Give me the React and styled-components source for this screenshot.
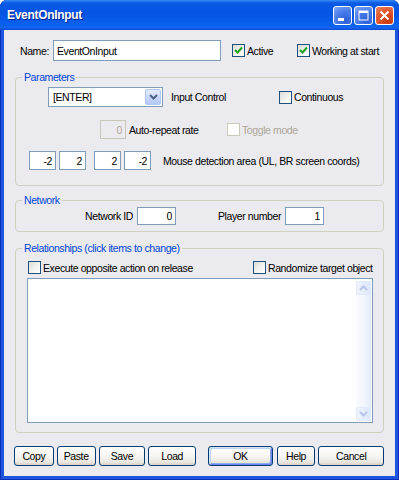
import React from "react";
import styled, { createGlobalStyle } from "styled-components";

const GlobalStyle = createGlobalStyle`
  html, body {
    margin: 0;
    padding: 0;
    background: #fff;
  }
  body {
    font-family: "Liberation Sans", Arial, sans-serif;
    font-size: 10.5px;
    letter-spacing: -0.4px;
    color: #000;
  }
  * {
    box-sizing: border-box;
  }
`;

const Window = styled.div`
  width: 399px;
  height: 480px;
  display: flex;
  flex-direction: column;
  background: #1d55df;
  border-radius: 7px 7px 0 0;
  overflow: hidden;
  padding: 0 4px 4px;
  box-shadow: inset 1px 0 #0b2fb8, inset -1px 0 #0b2fb8, inset 0 -1px #0b2fb8;
`;

const TitleBar = styled.div`
  height: 30px;
  margin: 0 -4px;
  display: flex;
  align-items: center;
  justify-content: space-between;
  padding: 0 5px 0 7px;
  background: linear-gradient(
    180deg,
    #3a8cf7 0%,
    #0a5ae6 10%,
    #0553e3 45%,
    #0b62ef 85%,
    #1665f0 93%,
    #0a45cf 100%
  );
`;

const Title = styled.span`
  color: #fff;
  font-weight: bold;
  font-size: 12px;
  letter-spacing: -0.3px;
  text-shadow: 1px 1px #0a1f8a;
`;

const TitleButtons = styled.div`
  display: flex;
  gap: 2px;
  margin-top: 1px;
`;

const TitleButton = styled.div`
  width: 19px;
  height: 19px;
  border: 1px solid #fff;
  border-radius: 3px;
  display: flex;
  align-items: center;
  justify-content: center;
  background: ${(p) =>
    p.$close
      ? "radial-gradient(circle at 70% 80%, #c8380f 0%, #e2582f 55%, #f08a66 100%)"
      : "radial-gradient(circle at 70% 80%, #2c5fd8 0%, #4a7eea 55%, #86aaf5 100%)"};
`;

const Body = styled.div`
  flex: 1;
  background: #ebeaef;
  padding: 10px 11px 0;
  display: flex;
  flex-direction: column;
`;

const Row = styled.div`
  display: flex;
  align-items: center;
  height: ${(p) => p.$h}px;
  margin-top: ${(p) => p.$mt || 0}px;
  margin-left: ${(p) => p.$ml || 0}px;
`;

const Label = styled.span`
  display: block;
  white-space: nowrap;
  margin-left: ${(p) => p.$ml || 0}px;
  width: ${(p) => (p.$w ? `${p.$w}px` : "auto")};
  text-align: ${(p) => (p.$right ? "right" : "left")};
  color: ${(p) => (p.$disabled ? "#aca899" : "#000")};
`;

const TextBox = styled.input`
  width: ${(p) => p.$w}px;
  height: ${(p) => p.$h || 19}px;
  margin: 0 0 0 ${(p) => p.$ml || 0}px;
  padding: 0 3px;
  border: 1px solid ${(p) => (p.disabled ? "#c9c7ba" : "#7f9db9")};
  background: ${(p) => (p.disabled ? "#ebeaef" : "#fff")};
  color: ${(p) => (p.disabled ? "#aca899" : "#000")};
  font: inherit;
  letter-spacing: inherit;
  text-align: ${(p) => (p.$right ? "right" : "left")};
  outline: none;
  -webkit-text-fill-color: ${(p) => (p.disabled ? "#aca899" : "#000")};
  opacity: 1;
`;

const CheckItem = styled.label`
  display: flex;
  align-items: center;
  gap: 2px;
  width: ${(p) => (p.$w ? `${p.$w}px` : "auto")};
  margin-left: ${(p) => p.$ml || 0}px;
  white-space: nowrap;
  color: ${(p) => (p.$disabled ? "#aca899" : "#000")};
`;

const Box = styled.span`
  width: 13px;
  height: 13px;
  flex: none;
  display: flex;
  align-items: center;
  justify-content: center;
  border: 1px solid ${(p) => (p.$disabled ? "#cac8bb" : "#1c5180")};
  background: ${(p) =>
    p.$disabled ? "#fff" : "linear-gradient(135deg, #dcdcd7 0%, #f4f4f1 60%, #fff 100%)"};
`;

const Group = styled.fieldset`
  margin: ${(p) => p.$mt}px 0 0;
  padding: 0 0 ${(p) => p.$pb}px;
  border: 1px solid #d0d0bf;
  border-radius: 4px;
  min-width: 0;
`;

const Legend = styled.legend`
  margin-left: 6px;
  padding: 0 2px;
  line-height: 13px;
  color: #0046d5;
`;

const Combo = styled.div`
  width: ${(p) => p.$w}px;
  height: 20px;
  margin-left: ${(p) => p.$ml}px;
  border: 1px solid #7f9db9;
  background: #fff;
  display: flex;
  align-items: stretch;
  justify-content: space-between;
  padding: 1px;
`;

const ComboText = styled.span`
  display: flex;
  align-items: center;
  padding-left: 3px;
`;

const ComboButton = styled.span`
  width: 16px;
  display: flex;
  align-items: center;
  justify-content: center;
  border: 1px solid #b1c7f3;
  border-radius: 2px;
  background: linear-gradient(180deg, #e3ebfd 0%, #c6d6fa 60%, #b5c9f6 100%);
`;

const ListBox = styled.div`
  margin: 4px 10px 0 11px;
  height: 145px;
  border: 1px solid #7f9db9;
  background: #fff;
  display: flex;
  justify-content: flex-end;
  padding: 2px 1px 1px 0;
`;

const ScrollBar = styled.div`
  width: 15px;
  display: flex;
  flex-direction: column;
  justify-content: space-between;
  background: linear-gradient(90deg, #fbfbfd 0%, #f2f5fc 50%, #e4ebfa 100%);
`;

const ScrollButton = styled.div`
  height: 14px;
  display: flex;
  align-items: center;
  justify-content: center;
  border: 1px solid #e2e9f8;
  border-radius: 2px;
  background: linear-gradient(90deg, #eef3fd 0%, #dde7fb 100%);
`;

const ButtonRow = styled.div`
  display: flex;
  margin: 13px 0 0 -1px;
`;

const Button = styled.button`
  width: ${(p) => p.$w}px;
  height: 20px;
  margin-left: ${(p) => p.$ml || 0}px;
  padding: 0;
  font: inherit;
  letter-spacing: inherit;
  color: #000;
  border: 1px solid #003c74;
  border-radius: 3px;
  background: linear-gradient(180deg, #ffffff 0%, #f5f4f0 55%, #e8e6df 85%, #d6d0c5 100%);
  box-shadow: ${(p) =>
    p.$default
      ? "inset 1px 1px #cee7ff, inset -1px -1px #6982ee, inset 2px 2px #bcd4f6, inset -2px -2px #89ade4"
      : "none"};
`;

function Check({ checked, disabled, children, w, ml }) {
  return (
    <CheckItem $w={w} $ml={ml} $disabled={disabled}>
      <Box $disabled={disabled}>
        {checked && (
          <svg width="9" height="9" viewBox="0 0 9 9">
            <path d="M1 4 L3.5 6.5 L8 1.5" stroke="#21a121" strokeWidth="2" fill="none" />
          </svg>
        )}
      </Box>
      {children}
    </CheckItem>
  );
}

function Chevron({ up, color }) {
  return (
    <svg width="9" height="6" viewBox="0 0 9 6">
      <path
        d={up ? "M1 5 L4.5 1.5 L8 5" : "M1 1 L4.5 4.5 L8 1"}
        stroke={color}
        strokeWidth="2"
        fill="none"
      />
    </svg>
  );
}

export default function App() {
  return (
    <>
      <GlobalStyle />
      <Window>
        <TitleBar>
          <Title>EventOnInput</Title>
          <TitleButtons>
            <TitleButton>
              <svg width="17" height="17" viewBox="0 0 17 17">
                <rect x="4" y="11" width="6" height="3" fill="#fff" />
              </svg>
            </TitleButton>
            <TitleButton>
              <svg width="17" height="17" viewBox="0 0 17 17">
                <rect x="4" y="4" width="9" height="9" fill="none" stroke="#fff" strokeWidth="1" />
                <rect x="4" y="4" width="9" height="2" fill="#fff" />
              </svg>
            </TitleButton>
            <TitleButton $close>
              <svg width="17" height="17" viewBox="0 0 17 17">
                <path d="M4.5 4.5 L12.5 12.5 M12.5 4.5 L4.5 12.5" stroke="#fff" strokeWidth="2" />
              </svg>
            </TitleButton>
          </TitleButtons>
        </TitleBar>

        <Body>
          <Row $h={21}>
            <Label $ml={5} $w={33}>Name:</Label>
            <TextBox $w={168} $h={21} defaultValue="EventOnInput" readOnly />
            <Check checked w={65} ml={11}>Active</Check>
            <Check checked>Working at start</Check>
          </Row>

          <Group $mt={10} $pb={15}>
            <Legend>Parameters</Legend>
            <Row $h={20} $mt={3}>
              <Combo $w={115} $ml={32}>
                <ComboText>[ENTER]</ComboText>
                <ComboButton>
                  <Chevron color="#4d6185" />
                </ComboButton>
              </Combo>
              <Label $ml={8} $w={108}>Input Control</Label>
              <Check>Continuous</Check>
            </Row>
            <Row $h={19} $mt={13}>
              <TextBox $w={26} $ml={84} $right disabled defaultValue="0" />
              <Label $ml={3} $w={98}>Auto-repeat rate</Label>
              <Check disabled>Toggle mode</Check>
            </Row>
            <Row $h={19} $mt={12}>
              <TextBox $w={27} $ml={13} $right defaultValue="-2" readOnly />
              <TextBox $w={27} $ml={3} $right defaultValue="2" readOnly />
              <TextBox $w={27} $ml={8} $right defaultValue="2" readOnly />
              <TextBox $w={27} $ml={3} $right defaultValue="-2" readOnly />
              <Label $ml={12}>Mouse detection area (UL, BR screen coords)</Label>
            </Row>
          </Group>

          <Group $mt={8} $pb={6}>
            <Legend>Network</Legend>
            <Row $h={18}>
              <Label $w={117} $right>Network ID</Label>
              <TextBox $w={39} $h={18} $ml={4} $right defaultValue="0" readOnly />
              <Label $w={105} $right>Player number</Label>
              <TextBox $w={39} $h={18} $ml={4} $right defaultValue="1" readOnly />
            </Row>
          </Group>

          <Group $mt={10} $pb={9}>
            <Legend>Relationships (click items to change)</Legend>
            <Row $h={13} $mt={6}>
              <Check w={225} ml={12}>Execute opposite action on release</Check>
              <Check>Randomize target object</Check>
            </Row>
            <ListBox>
              <ScrollBar>
                <ScrollButton>
                  <Chevron up color="#b7c5e6" />
                </ScrollButton>
                <ScrollButton>
                  <Chevron color="#b7c5e6" />
                </ScrollButton>
              </ScrollBar>
            </ListBox>
          </Group>

          <ButtonRow>
            <Button $w={40}>Copy</Button>
            <Button $w={39} $ml={3}>Paste</Button>
            <Button $w={47} $ml={3}>Save</Button>
            <Button $w={48} $ml={3}>Load</Button>
            <Button $w={65} $ml={12} $default>OK</Button>
            <Button $w={39} $ml={4}>Help</Button>
            <Button $w={66} $ml={3}>Cancel</Button>
          </ButtonRow>
        </Body>
      </Window>
    </>
  );
}
